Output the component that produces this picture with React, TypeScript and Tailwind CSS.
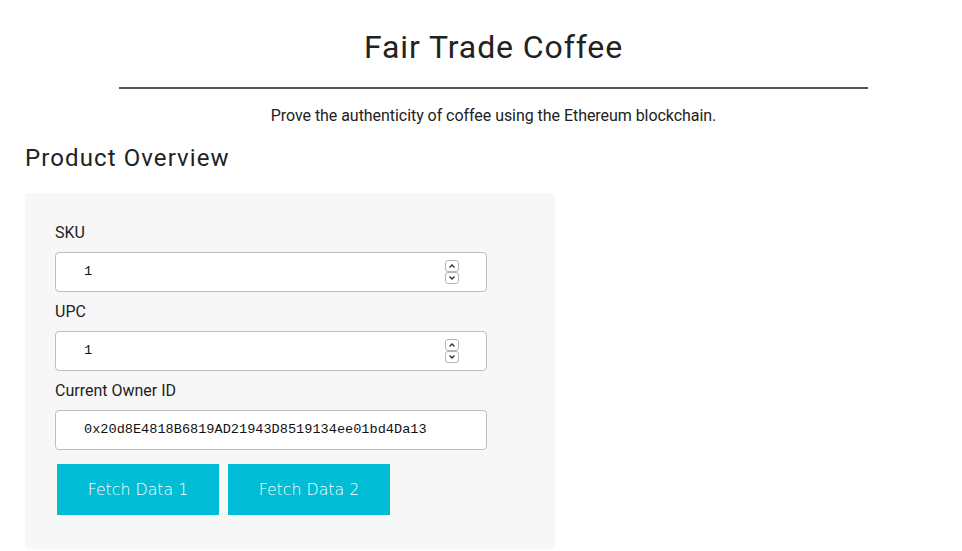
import React from "react";

function Spinner() {
  return (
    <div className="absolute left-[389px] top-[7px] flex flex-col">
      <div className="w-[14px] h-[12px] border border-[#b5b5b5] rounded-[3px] bg-white flex items-center justify-center">
        <svg width="8" height="6" viewBox="0 0 8 6"><path d="M1.5 4.5 L4 2 L6.5 4.5" fill="none" stroke="#333" strokeWidth="1.4" /></svg>
      </div>
      <div className="w-[14px] h-[12px] border border-[#b5b5b5] rounded-[3px] bg-white flex items-center justify-center">
        <svg width="8" height="6" viewBox="0 0 8 6"><path d="M1.5 1.5 L4 4 L6.5 1.5" fill="none" stroke="#333" strokeWidth="1.4" /></svg>
      </div>
    </div>
  );
}

function Field({ value, spinner }: { value: string; spinner?: boolean }) {
  return (
    <div className="relative w-[432px] h-[40px] bg-white border border-[#bdbdbd] rounded-[4px] flex items-center pl-[28px]">
      <span className="text-[13.6px] text-[#111]" style={{ fontFamily: '"Liberation Mono", monospace' }}>{value}</span>
      {spinner && <Spinner />}
    </div>
  );
}

function Label({ children }: { children: React.ReactNode }) {
  return <div className="h-[24px] leading-[24px] text-[16px] text-[#222]">{children}</div>;
}

export default function App() {
  return (
    <div className="pl-[25px] bg-white min-h-[551px]" style={{ fontFamily: 'Roboto, "Liberation Sans", sans-serif' }}>
      <div className="flex flex-col items-center">
        <h1 className="text-[32px] text-[#222] leading-[36px] mt-[29px] tracking-[0.9px]">Fair Trade Coffee</h1>
        <div className="w-[80%] h-[2px] bg-[#555] mt-[22px]" />
        <p className="text-[16px] text-[#222] leading-[20px] mt-[17px] tracking-[-0.05px]">Prove the authenticity of coffee using the Ethereum blockchain.</p>
      </div>
      <h2 className="text-[24px] text-[#222] leading-[28px] mt-[18px] tracking-[1.1px]">Product Overview</h2>
      <div className="mt-[21px] w-[530px] bg-[#f7f7f7] rounded-[4px] pl-[30px] pt-[28px] pb-[34px]">
        <Label>SKU</Label>
        <div className="mt-[7px]"><Field value="1" spinner /></div>
        <div className="mt-[8px]"><Label>UPC</Label></div>
        <div className="mt-[7px]"><Field value="1" spinner /></div>
        <div className="mt-[8px]"><Label>Current Owner ID</Label></div>
        <div className="mt-[7px]"><Field value="0x20d8E4818B6819AD21943D8519134ee01bd4Da13" /></div>
        <div className="mt-[14px] ml-[2px] flex gap-[9px]">
          <button className="w-[162px] h-[51px] bg-[#00bcd4] text-white text-[15.8px] font-extralight" style={{ fontFamily: '"DejaVu Sans", sans-serif' }}>Fetch Data 1</button>
          <button className="w-[162px] h-[51px] bg-[#00bcd4] text-white text-[15.8px] font-extralight" style={{ fontFamily: '"DejaVu Sans", sans-serif' }}>Fetch Data 2</button>
        </div>
      </div>
    </div>
  );
}
